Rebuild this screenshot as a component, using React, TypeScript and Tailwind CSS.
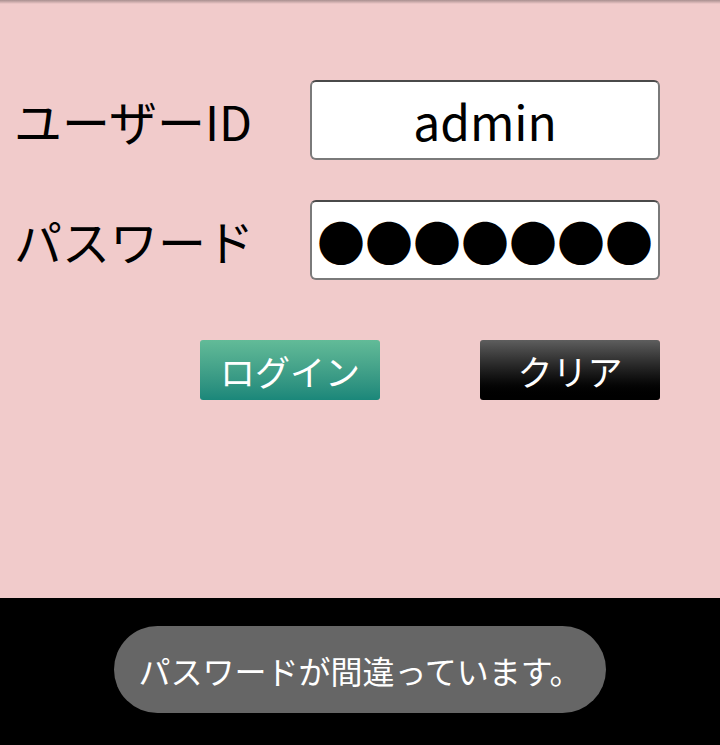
import React from "react";

const JP = { fontFamily: '"Noto Sans CJK JP", "Noto Sans", sans-serif' };

export default function App() {
  return (
    <div className="w-[720px] h-[745px] flex flex-col overflow-hidden" style={JP}>
      <div className="h-[598px] bg-[#f1cbcb] flex flex-col">
        <div className="h-[4px] bg-gradient-to-b from-[#a98f8f] to-[#f1cbcb]" />
        <div className="mt-[76px] flex flex-col gap-[40px] pl-[14px] pr-[60px]">
          <div className="flex items-center h-[80px]">
            <div className="w-[296px] text-[48px] leading-none text-black">ユーザーID</div>
            <div className="w-[350px] h-[80px] bg-white border-2 border-[#7a7a7a] border-t-[#4a4a4a] rounded-[6px] flex items-center justify-center text-[48px] leading-none text-black">
              admin
            </div>
          </div>
          <div className="flex items-center h-[80px]">
            <div className="w-[296px] text-[48px] leading-none text-black">パスワード</div>
            <div className="w-[350px] h-[80px] bg-white border-2 border-[#7a7a7a] border-t-[#4a4a4a] rounded-[6px] flex items-center justify-center text-[48px] leading-none text-black">
              ●●●●●●●
            </div>
          </div>
        </div>
        <div className="mt-[60px] flex pl-[200px] gap-[100px]">
          <div className="w-[180px] h-[60px] rounded-[3px] bg-gradient-to-b from-[#62bb98] to-[#1a877a] flex items-center justify-center text-white text-[35px] leading-none">
            ログイン
          </div>
          <div className="w-[180px] h-[60px] rounded-[3px] bg-gradient-to-b from-[#5e5e5e] to-[#000000] flex items-center justify-center text-white text-[35px] leading-none">
            クリア
          </div>
        </div>
      </div>
      <div className="flex-1 bg-black flex justify-center pt-[28px]">
        <div className="w-[492px] h-[87px] rounded-full bg-[#666666] flex items-center justify-center text-white text-[32px] leading-none">
          パスワードが間違っています。
        </div>
      </div>
    </div>
  );
}
